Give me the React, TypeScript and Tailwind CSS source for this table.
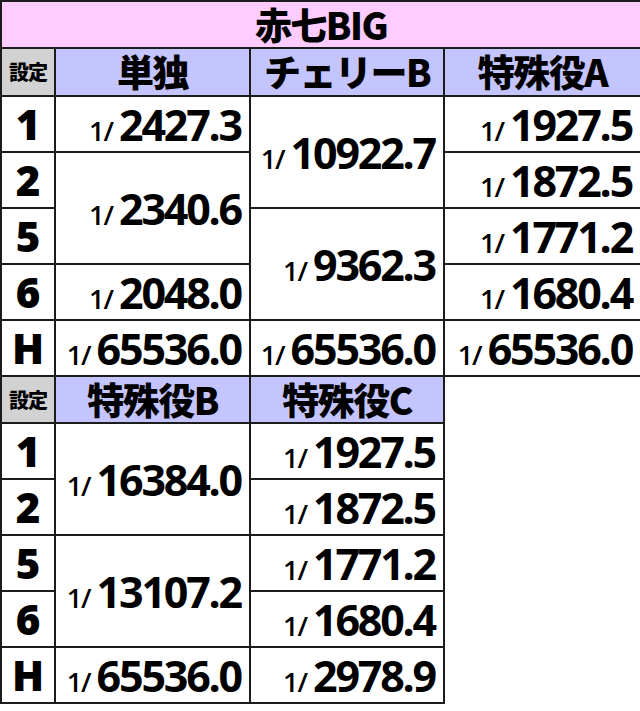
import React from 'react';

const NUM_FONT = { fontFamily: '"Open Sans", "Noto Sans", sans-serif' };
const JP_FONT = { fontFamily: '"Noto Sans CJK JP", "Noto Sans", sans-serif' };

type Cell = { v: string; span?: number } | null;

// null = covered by a rowSpan from above
const top: { s: string; cells: Cell[] }[] = [
  { s: '1', cells: [{ v: '2427.3' }, { v: '10922.7', span: 2 }, { v: '1927.5' }] },
  { s: '2', cells: [{ v: '2340.6', span: 2 }, null, { v: '1872.5' }] },
  { s: '5', cells: [null, { v: '9362.3', span: 2 }, { v: '1771.2' }] },
  { s: '6', cells: [{ v: '2048.0' }, null, { v: '1680.4' }] },
  { s: 'H', cells: [{ v: '65536.0' }, { v: '65536.0' }, { v: '65536.0' }] },
];

const bottom: { s: string; cells: Cell[] }[] = [
  { s: '1', cells: [{ v: '16384.0', span: 2 }, { v: '1927.5' }] },
  { s: '2', cells: [null, { v: '1872.5' }] },
  { s: '5', cells: [{ v: '13107.2', span: 2 }, { v: '1771.2' }] },
  { s: '6', cells: [null, { v: '1680.4' }] },
  { s: 'H', cells: [{ v: '65536.0' }, { v: '2978.9' }] },
];

const bd = 'border-2 border-[#1c1c1c]';

function Prob({ v }: { v: string }) {
  return (
    <span className="whitespace-nowrap text-black" style={NUM_FONT}>
      <span className="text-[27px] font-semibold mr-[6px] tracking-[-1px]">1/</span>
      <span className="text-[43px] font-bold tracking-[-2.2px]">{v}</span>
    </span>
  );
}

function SettingCell({ s }: { s: string }) {
  return (
    <td className={`${bd} text-center align-middle p-0`}>
      <span className="text-[42px] font-extrabold leading-none text-black" style={NUM_FONT}>
        {s}
      </span>
    </td>
  );
}

function SettingHead() {
  return (
    <td className={`${bd} bg-[#d2d2d2] text-center align-middle p-0`}>
      <span className="text-[20px] font-black text-black tracking-[-1px]" style={JP_FONT}>
        設定
      </span>
    </td>
  );
}

function Head({ label }: { label: string }) {
  return (
    <td className={`${bd} bg-[#c4c4ff] text-center align-middle p-0`}>
      <span className="text-[37px] font-black leading-[40px] text-black tracking-[-1.5px]" style={JP_FONT}>
        {label}
      </span>
    </td>
  );
}

function ProbRow({ s, cells, extra }: { s: string; cells: Cell[]; extra?: boolean }) {
  return (
    <tr className="h-[56px]">
      <SettingCell s={s} />
      {cells.map((c, i) =>
        c ? (
          <td key={i} rowSpan={c.span} className={`${bd} text-right align-middle pr-[8px] pl-0 py-0 leading-none`}>
            <Prob v={c.v} />
          </td>
        ) : null
      )}
      {extra && <td className="border-0 p-0" />}
    </tr>
  );
}

export default function App() {
  return (
    <div className="w-[640px] h-[711px] bg-white overflow-hidden">
      <table className="border-collapse table-fixed w-[640px]">
        <colgroup>
          <col className="w-[54px]" />
          <col className="w-[195px]" />
          <col className="w-[194px]" />
          <col className="w-[197px]" />
        </colgroup>
        <tbody>
          <tr className="h-[47px]">
            <td colSpan={4} className={`${bd} bg-[#ffccff] text-center align-middle p-0`}>
              <span className="text-[37px] font-black leading-[40px] text-black tracking-[-1.5px]" style={JP_FONT}>
                赤七BIG
              </span>
            </td>
          </tr>
          <tr className="h-[48px]">
            <SettingHead />
            <Head label="単独" />
            <Head label="チェリーB" />
            <Head label="特殊役A" />
          </tr>
          {top.map((r) => (
            <ProbRow key={'t' + r.s} s={r.s} cells={r.cells} />
          ))}
          <tr className="h-[47px]">
            <SettingHead />
            <Head label="特殊役B" />
            <Head label="特殊役C" />
            <td className="border-0 p-0" />
          </tr>
          {bottom.map((r) => (
            <ProbRow key={'b' + r.s} s={r.s} cells={r.cells} extra />
          ))}
        </tbody>
      </table>
    </div>
  );
}
